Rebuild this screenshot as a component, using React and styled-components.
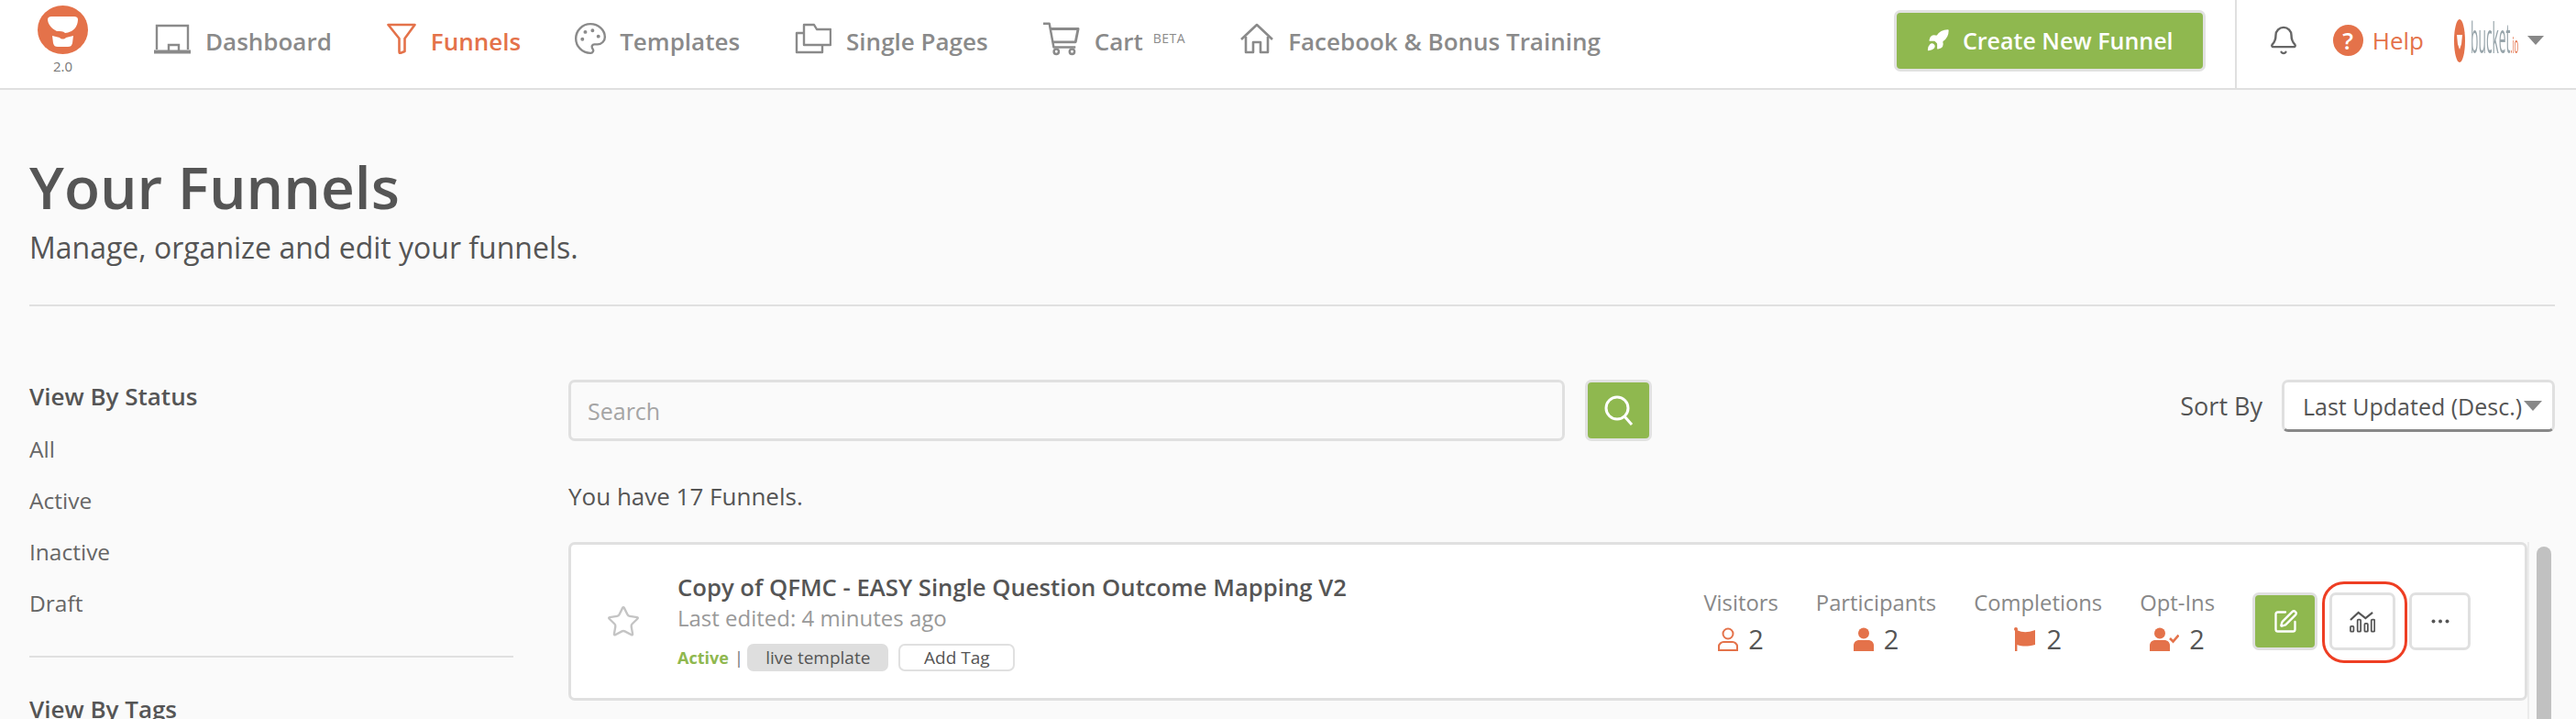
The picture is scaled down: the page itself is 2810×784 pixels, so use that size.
import React from 'react'
import styled, { createGlobalStyle } from 'styled-components'
import { Palette, Bell, Rocket, SquarePen, Star } from 'lucide-react'

const orange = '#e4724a'
const green = '#8fb84f'
const line = '#e0e0e0'

const GlobalStyle = createGlobalStyle`
  html, body {
    margin: 0;
    padding: 0;
    background: #fafafa;
  }
  * {
    box-sizing: border-box;
  }
  body {
    font-family: "Open Sans", "Liberation Sans", sans-serif;
    color: #555;
  }
`

const Page = styled.div`
  height: 100vh;
  overflow: hidden;
`

const Header = styled.header`
  display: flex;
  align-items: center;
  height: 98px;
  padding: 0 35px 0 41px;
  background: #fff;
  border-bottom: 2px solid ${line};
`

const LogoBox = styled.div`
  display: flex;
  flex-direction: column;
  align-items: center;
  width: 55px;
  margin: 0 72px 10px 0;
  font-size: 15px;
  line-height: 18px;
  color: #777;
  svg {
    display: block;
    margin-bottom: 4px;
  }
`

const Nav = styled.nav`
  display: flex;
  align-items: center;
  gap: 60px;
  padding-bottom: 6px;
`

const NavItem = styled.a`
  display: flex;
  align-items: center;
  gap: 16px;
  font-size: 26px;
  font-weight: 600;
  color: ${p => (p.$active ? orange : '#8a8a8a')};
  white-space: nowrap;
  svg {
    display: block;
    flex: none;
    margin-bottom: 6px;
  }
`

const PaletteIcon = styled(Palette)`
  margin-left: -3px;
  margin-right: -3px;
`

const Beta = styled.span`
  font-size: 14px;
  font-weight: 400;
  letter-spacing: 0.5px;
  margin-left: -5px;
  align-self: flex-start;
  margin-top: 9px;
`

const HeaderRight = styled.div`
  display: flex;
  align-items: center;
  height: 100%;
  margin-left: auto;
  padding-bottom: 8px;
`

const CreateButton = styled.button`
  display: flex;
  align-items: center;
  justify-content: center;
  gap: 14px;
  width: 340px;
  height: 67px;
  border: 3px solid #e2e2e2;
  border-radius: 7px;
  background: ${green};
  color: #fff;
  font-family: inherit;
  font-size: 25px;
  font-weight: 600;
`

const HeaderDivider = styled.div`
  align-self: stretch;
  width: 2px;
  margin: 0 34px -8px 32px;
  background: ${line};
`

const HelpGroup = styled.div`
  display: flex;
  align-items: center;
  gap: 10px;
  margin: 0 33px 0 37px;
  font-size: 26px;
  font-weight: 500;
  color: ${orange};
`

const HelpDot = styled.span`
  display: flex;
  align-items: center;
  justify-content: center;
  width: 33px;
  height: 34px;
  border-radius: 50%;
  background: ${orange};
  color: #fff;
  font-size: 26px;
  font-weight: 600;
`

const Brand = styled.div`
  display: flex;
  align-items: center;
  width: 65px;
  height: 48px;
  filter: blur(0.5px);
  svg {
    flex: none;
  }
`

const BrandText = styled.span`
  display: inline-block;
  margin-left: 6px;
  font-size: 46px;
  line-height: 48px;
  font-weight: 400;
  color: #98a5ab;
  transform: scaleX(0.3);
  transform-origin: left center;
  i {
    font-style: normal;
    font-size: 26px;
    color: ${orange};
  }
`

const Caret = styled.span`
  flex: none;
  width: 0;
  height: 0;
  margin-left: ${p => p.$ml || 0}px;
  border-left: ${p => p.$w || 9}px solid transparent;
  border-right: ${p => p.$w || 9}px solid transparent;
  border-top: ${p => p.$h || 10}px solid #888;
`

const Content = styled.main`
  padding: 66px 23px 0 32px;
`

const Title = styled.h1`
  margin: 0;
  font-size: 64px;
  line-height: 80px;
  font-weight: 600;
  color: #555;
`

const Subtitle = styled.p`
  margin: 6px 0 42px;
  font-size: 32px;
  line-height: 40px;
  color: #555;
`

const Rule = styled.hr`
  margin: 0;
  height: 2px;
  border: none;
  background: ${line};
`

const Columns = styled.div`
  display: grid;
  grid-template-columns: 528px 1fr;
  column-gap: 60px;
  margin-top: 80px;
`

const SideHeading = styled.h3`
  margin: 0;
  font-size: 26px;
  line-height: 36px;
  font-weight: 600;
  color: #555;
`

const SideList = styled.ul`
  display: flex;
  flex-direction: column;
  gap: 20px;
  margin: 22px 0 39px;
  padding: 0;
  list-style: none;
  font-size: 24.5px;
  line-height: 36px;
  color: #666;
`

const SideRule = styled(Rule)`
  margin-bottom: 38px;
`

const SearchRow = styled.div`
  display: flex;
  align-items: flex-start;
`

const SearchInput = styled.input`
  width: 1087px;
  height: 67px;
  padding: 0 18px;
  border: 3px solid ${line};
  border-radius: 7px;
  background: #fafafa;
  font-family: inherit;
  font-size: 25px;
  color: #555;
  &::placeholder {
    color: #a5a5a5;
    opacity: 1;
  }
`

const SearchButton = styled.button`
  display: flex;
  align-items: center;
  justify-content: center;
  width: 73px;
  height: 67px;
  margin-left: 22px;
  padding: 0;
  border: 3px solid #e2e2e2;
  border-radius: 7px;
  background: ${green};
`

const SortLabel = styled.span`
  margin: 11px 21px 0 auto;
  font-size: 27px;
  line-height: 36px;
  color: #555;
  font-weight: 500;
`

const SortSelect = styled.div`
  display: flex;
  align-items: center;
  gap: 2px;
  width: 298px;
  height: 57px;
  padding-left: 20px;
  border: 3px solid ${line};
  border-bottom-color: #888;
  border-radius: 7px;
  background: #fff;
  font-size: 25px;
  font-weight: 500;
  color: #555;
  white-space: nowrap;
`

const CountText = styled.p`
  margin: 42px 0 32px;
  font-size: 26px;
  line-height: 36px;
  color: #555;
`

const ListRow = styled.div`
  display: flex;
  align-items: flex-start;
`

const Card = styled.article`
  flex: 1;
  display: flex;
  align-items: center;
  height: 173px;
  padding: 0 59px 0 38px;
  border: 3px solid ${line};
  border-radius: 7px;
  background: #fff;
`

const StarIcon = styled(Star)`
  flex: none;
  margin-right: 40px;
  color: #c4c4c4;
`

const Info = styled.div`
  align-self: flex-start;
  margin-top: 32px;
`

const FunnelName = styled.h2`
  margin: 0;
  font-size: 25.7px;
  line-height: 30px;
  font-weight: 600;
  color: #555;
  white-space: nowrap;
`

const Edited = styled.p`
  margin: 3px 0 13px;
  font-size: 24px;
  line-height: 30px;
  color: #999;
`

const TagRow = styled.div`
  display: flex;
  align-items: center;
  font-size: 19px;
  line-height: 24px;
`

const ActiveLabel = styled.span`
  font-size: 18px;
  font-weight: 700;
  color: ${green};
`

const Pipe = styled.span`
  margin: 0 4px 0 6px;
  color: #777;
`

const Tag = styled.span`
  display: flex;
  align-items: center;
  justify-content: center;
  width: ${p => p.$w}px;
  height: 30px;
  margin-right: 11px;
  border: 2px solid ${p => (p.$filled ? '#dedede' : line)};
  border-radius: 7px;
  background: ${p => (p.$filled ? '#dedede' : '#fff')};
  color: #555;
`

const Stats = styled.div`
  display: flex;
  gap: 41px;
  margin-left: auto;
  margin-right: 41px;
  margin-top: 3px;
`

const Stat = styled.div`
  display: flex;
  flex-direction: column;
  align-items: center;
`

const StatLabel = styled.span`
  font-size: 23.8px;
  line-height: 32px;
  color: #888;
`

const StatValue = styled.span`
  display: flex;
  align-items: center;
  gap: 11px;
  margin-top: 4px;
  font-size: 29px;
  line-height: 40px;
  color: #555;
`

const Actions = styled.div`
  display: flex;
  align-items: center;
`

const ActionButton = styled.button`
  position: relative;
  display: flex;
  align-items: center;
  justify-content: center;
  width: ${p => p.$w}px;
  height: 63px;
  margin-right: ${p => p.$mr || 0}px;
  padding: 0;
  border: 3px solid ${line};
  border-radius: 7px;
  background: ${p => (p.$primary ? green : '#fff')};
  color: ${p => (p.$primary ? '#fff' : '#555')};
`

const Highlight = styled.span`
  position: absolute;
  top: -15px;
  bottom: -17px;
  left: -11px;
  right: -16px;
  border: 3px solid #ee3e23;
  border-radius: 24px;
  pointer-events: none;
`

const ScrollTrack = styled.div`
  flex: none;
  width: 30px;
  height: 300px;
  padding: 5px 0 0 8px;
  border-left: 2px solid #ececec;
`

const ScrollThumb = styled.div`
  width: 16px;
  height: 100%;
  border-radius: 8px 8px 0 0;
  background: #c1c1c1;
`

const BrandLogo = () => (
  <svg width="55" height="53" viewBox="0 0 55 53">
    <ellipse cx="27.5" cy="26.5" rx="27.5" ry="26.5" fill={orange} />
    <path d="M11 15c0-2 2-3 4-3h25c2 0 4 1 4 3 0 5-2 10-7 13-3 1-5 2-7 2-2-2-5-2-9-2-6-3-10-8-10-13z" fill="#fff" />
    <path d="M16 33l8 2c2 2 5 2 7 0l8-2-1 8c-1 3-2 4-5 4H22c-3 0-4-1-5-4z" fill="#fff" />
  </svg>
)

const BucketMark = () => (
  <svg width="12" height="47" viewBox="0 0 12 47">
    <ellipse cx="6" cy="23.5" rx="6" ry="23.5" fill={orange} />
    <path d="M3 17h6l-1 10-2 6-2-6z" fill="#fff" />
  </svg>
)

const LaptopIcon = () => (
  <svg width="40" height="33" viewBox="0 0 40 33" fill="none" stroke="#8a8a8a" strokeWidth="2.4">
    <path d="M3 28V2h34v26" />
    <path d="M0 30.5h40" strokeWidth="4" />
    <path d="M16 29v-6h11v6" />
  </svg>
)

const FunnelIcon = () => (
  <svg width="32" height="34" viewBox="0 0 32 34" fill="none" stroke={orange} strokeWidth="2.6" strokeLinejoin="round">
    <path d="M1.5 2h29L19.5 17v14l-5 2c-1 0-1-1-1-2V17z" />
  </svg>
)

const FoldersIcon = () => (
  <svg width="40" height="34" viewBox="0 0 40 34" fill="none" stroke="#8a8a8a" strokeWidth="2.4" strokeLinejoin="round">
    <path d="M10 24V2h11l3 5h15v17z" />
    <path d="M10 11H2v21h28v-8" />
  </svg>
)

const CartIcon = () => (
  <svg width="40" height="38" viewBox="0 0 42 38" fill="none" stroke="#8a8a8a" strokeWidth="2.6" strokeLinejoin="round">
    <path d="M0 2h7l5 27h25" />
    <path d="M8 8h32l-3 15H11" strokeWidth="3" />
    <circle cx="15" cy="34" r="2.8" />
    <circle cx="33" cy="34" r="2.8" />
  </svg>
)

const HouseIcon = () => (
  <svg width="36" height="34" viewBox="0 0 36 34" fill="none" stroke="#8a8a8a" strokeWidth="2.6" strokeLinejoin="round">
    <path d="M1 18L18 2l17 16" />
    <path d="M6 15v17h8V21h8v11h8V15" />
  </svg>
)

const SearchIcon = () => (
  <svg width="32" height="34" viewBox="0 0 32 34" fill="none" stroke="#fff" strokeWidth="3">
    <circle cx="14" cy="14" r="12" />
    <path d="M22 23l8 9" />
  </svg>
)

const ChartIcon = () => (
  <svg width="28" height="24" viewBox="0 0 29 24" fill="none" stroke="#555" strokeWidth="1.8">
    <path d="M1 10L10 1.5 18 8l8-6.5" strokeWidth="2.2" />
    <rect x="1" y="17" width="3.6" height="6" rx="1" />
    <rect x="9" y="9.5" width="3.6" height="13.5" rx="1" />
    <rect x="17" y="14" width="3.6" height="9" rx="1" />
    <rect x="24.6" y="9.5" width="3.6" height="13.5" rx="1" />
  </svg>
)

const DotsIcon = () => (
  <svg width="20" height="5" viewBox="0 0 20 5" fill="#555">
    <circle cx="2.5" cy="2.5" r="2" />
    <circle cx="10" cy="2.5" r="2" />
    <circle cx="17.5" cy="2.5" r="2" />
  </svg>
)

const VisitorIcon = () => (
  <svg width="22" height="26" viewBox="0 0 22 26" fill="none" stroke={orange} strokeWidth="2">
    <circle cx="11" cy="7" r="5.5" />
    <path d="M1 25v-4c0-3 3-5 5-5h10c2 0 5 2 5 5v4z" />
  </svg>
)

const PersonIcon = () => (
  <svg width="22" height="26" viewBox="0 0 22 26" fill={orange}>
    <circle cx="11" cy="6.5" r="6" />
    <path d="M0 26v-6c0-4 3-6 6-6h10c3 0 6 2 6 6v6z" />
  </svg>
)

const FlagIcon = () => (
  <svg width="24" height="26" viewBox="0 0 24 26" fill={orange}>
    <circle cx="2" cy="2" r="2" />
    <rect x="1" y="2" width="2.4" height="24" />
    <path d="M3 3c7 3 11 3 20 0v16c-9 2-13 2-20 0z" />
  </svg>
)

const OptInIcon = () => (
  <svg width="32" height="26" viewBox="0 0 32 26" fill={orange}>
    <circle cx="11" cy="6.5" r="6" />
    <path d="M0 26v-6c0-4 3-6 6-6h10c3 0 6 2 6 6v6z" />
    <path d="M22 12l3.5 3.5 6-7" fill="none" stroke={orange} strokeWidth="2.6" />
  </svg>
)

const statuses = ['All', 'Active', 'Inactive', 'Draft']

const stats = [
  { label: 'Visitors', value: 2, icon: <VisitorIcon /> },
  { label: 'Participants', value: 2, icon: <PersonIcon /> },
  { label: 'Completions', value: 2, icon: <FlagIcon /> },
  { label: 'Opt-Ins', value: 2, icon: <OptInIcon /> },
]

export default function App() {
  return (
    <Page>
      <GlobalStyle />
      <Header>
        <LogoBox>
          <BrandLogo />
          2.0
        </LogoBox>
        <Nav>
          <NavItem><LaptopIcon />Dashboard</NavItem>
          <NavItem $active><FunnelIcon />Funnels</NavItem>
          <NavItem><PaletteIcon size={38} strokeWidth={1.5} />Templates</NavItem>
          <NavItem><FoldersIcon />Single Pages</NavItem>
          <NavItem><CartIcon />Cart<Beta>BETA</Beta></NavItem>
          <NavItem><HouseIcon />Facebook &amp; Bonus Training</NavItem>
        </Nav>
        <HeaderRight>
          <CreateButton><Rocket size={26} fill="#fff" strokeWidth={1.6} />Create New Funnel</CreateButton>
          <HeaderDivider />
          <Bell size={34} color="#666" strokeWidth={1.7} />
          <HelpGroup>
            <HelpDot>?</HelpDot>
            Help
          </HelpGroup>
          <Brand>
            <BucketMark />
            <BrandText>bucket<i>.io</i></BrandText>
          </Brand>
          <Caret $ml={15} />
        </HeaderRight>
      </Header>
      <Content>
        <Title>Your Funnels</Title>
        <Subtitle>Manage, organize and edit your funnels.</Subtitle>
        <Rule />
        <Columns>
          <aside>
            <SideHeading>View By Status</SideHeading>
            <SideList>
              {statuses.map(s => <li key={s}>{s}</li>)}
            </SideList>
            <SideRule />
            <SideHeading>View By Tags</SideHeading>
          </aside>
          <div>
            <SearchRow>
              <SearchInput placeholder="Search" readOnly />
              <SearchButton><SearchIcon /></SearchButton>
              <SortLabel>Sort By</SortLabel>
              <SortSelect>Last Updated (Desc.)<Caret $w={10} $h={11} /></SortSelect>
            </SearchRow>
            <CountText>You have 17 Funnels.</CountText>
            <ListRow>
              <Card>
                <StarIcon size={38} strokeWidth={1.5} />
                <Info>
                  <FunnelName>Copy of QFMC - EASY Single Question Outcome Mapping V2</FunnelName>
                  <Edited>Last edited: 4 minutes ago</Edited>
                  <TagRow>
                    <ActiveLabel>Active</ActiveLabel>
                    <Pipe>|</Pipe>
                    <Tag $filled $w={154}>live template</Tag>
                    <Tag $w={127}>Add Tag</Tag>
                  </TagRow>
                </Info>
                <Stats>
                  {stats.map(s => (
                    <Stat key={s.label}>
                      <StatLabel>{s.label}</StatLabel>
                      <StatValue>{s.icon}{s.value}</StatValue>
                    </Stat>
                  ))}
                </Stats>
                <Actions>
                  <ActionButton $primary $w={71} $mr={13}><SquarePen size={28} strokeWidth={2} /></ActionButton>
                  <ActionButton $w={72} $mr={15}><ChartIcon /><Highlight /></ActionButton>
                  <ActionButton $w={67}><DotsIcon /></ActionButton>
                </Actions>
              </Card>
              <ScrollTrack><ScrollThumb /></ScrollTrack>
            </ListRow>
          </div>
        </Columns>
      </Content>
    </Page>
  )
}
